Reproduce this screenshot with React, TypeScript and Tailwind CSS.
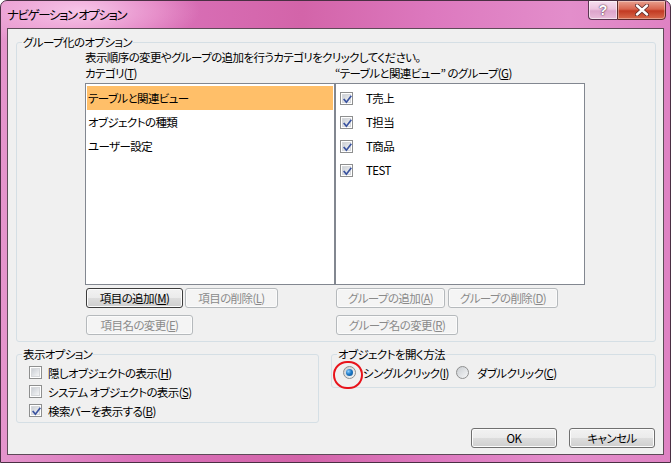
import React from "react";

const F = "font-['Noto_Sans_CJK_JP','Liberation_Sans',sans-serif] [font-feature-settings:'palt']";

function Check({ checked }: { checked: boolean }) {
  return (
    <div className="relative w-[13px] h-[13px] shrink-0 border border-[#8e8f8f] bg-white">
      <div className="absolute inset-[1px] bg-[linear-gradient(135deg,#cbcfd5_0%,#f4f5f6_100%)] border border-[#d6d8db]" />
      {checked && (
        <svg className="absolute left-[1px] top-[1px]" width="11" height="11" viewBox="0 0 11 11">
          <path d="M2.2 5.6 L4.4 8.2 L8.8 2.4" fill="none" stroke="#3b54a0" strokeWidth="1.7" strokeLinecap="square" />
        </svg>
      )}
    </div>
  );
}

function Radio({ checked }: { checked: boolean }) {
  return (
    <div className="relative w-[13px] h-[13px] shrink-0 rounded-full border border-[#8e8f8f] bg-[linear-gradient(135deg,#c9cdd1_0%,#f6f7f8_100%)]">
      {checked && (
        <div className="absolute left-[2px] top-[2px] w-[7px] h-[7px] rounded-full bg-[radial-gradient(circle_at_35%_35%,#8fd0ff_0%,#1d7ac8_45%,#0d4d8c_100%)]" />
      )}
    </div>
  );
}

function Btn({ children, cls, disabled, focus }: { children: React.ReactNode; cls: string; disabled?: boolean; focus?: boolean }) {
  const base = "h-[20px] shrink-0 flex items-center justify-center rounded-[3px] border text-[11.5px] leading-[16px] whitespace-nowrap";
  const st = disabled
    ? "border-[#b5b9bc] bg-[#f4f4f4] text-[#8a8a8a] shadow-[inset_0_0_0_1px_#fbfbfb]"
    : focus
    ? "border-[#3c3c3c] bg-[linear-gradient(#f2f2f2_0%,#ebebeb_50%,#dddddd_50%,#cfcfcf_100%)] text-black shadow-[inset_0_0_0_1px_#fcfcfc]"
    : "border-[#707070] bg-[linear-gradient(#f2f2f2_0%,#ebebeb_50%,#dddddd_50%,#cfcfcf_100%)] text-black shadow-[inset_0_0_0_1px_#fcfcfc]";
  return <div className={`${base} ${st} ${cls}`}>{children}</div>;
}

function Group({ label, cls, children }: { label: string; cls: string; children: React.ReactNode }) {
  return (
    <div className={`relative shrink-0 rounded-[3px] border border-[#d5dfe5] ${cls}`}>
      <div className="absolute left-[5px] top-[-9px] bg-[#f0f0f0] px-[1px] leading-[16px] text-black whitespace-nowrap">{label}</div>
      {children}
    </div>
  );
}

export default function App() {
  return (
    <div className={`w-[671px] h-[463px] ${F}`}>
      <div className="w-full h-full flex flex-col rounded-t-[7px] border border-[#4a2f43] bg-[linear-gradient(90deg,#e495cc_0%,#da72ba_20%,#d364a9_45%,#dd79bf_65%,#e38ecb_85%,#df82c3_100%)] relative overflow-hidden">
        <div className="absolute left-[-40px] top-[-30px] w-[240px] h-[80px] rounded-full bg-[radial-gradient(ellipse_at_center,rgba(255,220,245,0.75)_0%,rgba(255,200,235,0.35)_45%,rgba(255,200,235,0)_70%)]" />
        {/* title bar */}
        <div className="relative h-[27px] shrink-0 flex items-start justify-between pl-[6px] pr-[4px]">
          <div className="pt-[5px] text-[12.5px] leading-[18px] tracking-[-1.4px] text-black">ナビゲーション オプション</div>
          <div className="flex -mt-[1px]">
            <div className="w-[29px] h-[20px] rounded-bl-[4px] border border-[#5a3550] border-r-0 bg-[linear-gradient(#f6e0ef_0%,#ecc4de_45%,#dca4cb_55%,#e8bcd9_100%)] flex items-center justify-center shadow-[inset_0_0_0_1px_rgba(255,255,255,0.55)]">
              <span className="text-[14px] leading-[14px] font-bold text-white [text-shadow:0_0_2px_#5a3550,0_0_1px_#5a3550] font-['Liberation_Sans',sans-serif]">?</span>
            </div>
            <div className="w-[49px] h-[20px] rounded-br-[4px] border border-[#5a2a2a] bg-[linear-gradient(#e8a08f_0%,#d8654f_45%,#c23a22_55%,#d86a4c_100%)] flex items-center justify-center shadow-[inset_0_0_0_1px_rgba(255,255,255,0.35)]">
              <svg width="14" height="12" viewBox="0 0 14 12">
                <path d="M2 1.5 L12 10.5 M12 1.5 L2 10.5" stroke="#5a2a2a" strokeWidth="4" strokeLinecap="round" />
                <path d="M2 1.5 L12 10.5 M12 1.5 L2 10.5" stroke="#ffffff" strokeWidth="2.4" strokeLinecap="round" />
              </svg>
            </div>
          </div>
        </div>
        {/* client */}
        <div className="relative mx-[6px] h-[427px] shrink-0 border border-[#5e4a58] bg-[#f0f0f0] flex flex-col pl-[8px] pr-[7px] pt-[13px] pb-[6px] text-[11.5px] leading-[16px] tracking-[-0.6px] text-black">
          <Group label="グループ化のオプション" cls="w-[640px] h-[300px] pl-[68px] pt-[6px]">
            <div className="whitespace-nowrap">表示順序の変更やグループの追加を行うカテゴリをクリックしてください。</div>
            <div className="flex">
              {/* left column */}
              <div className="w-[250px] flex flex-col">
                <div>カテゴリ(<u>T</u>)</div>
                <div className="mt-[2px] h-[202px] border border-[#828790] bg-white pt-[2px] px-[1px]">
                  <div className="h-[24px] bg-[#ffbf69] flex items-center pl-[1px]">テーブルと関連ビュー</div>
                  <div className="h-[24px] flex items-center pl-[1px]">オブジェクトの種類</div>
                  <div className="h-[24px] flex items-center pl-[1px]">ユーザー設定</div>
                </div>
                <div className="mt-[3px] ml-[1px] flex gap-[2px]">
                  <Btn cls="w-[97px]" focus>項目の追加(<u>M</u>)</Btn>
                  <Btn cls="w-[93px]" disabled>項目の削除(<u>L</u>)</Btn>
                </div>
                <div className="mt-[7px] ml-[1px] flex">
                  <Btn cls="w-[107px]" disabled>項目名の変更(<u>E</u>)</Btn>
                </div>
              </div>
              {/* right column */}
              <div className="w-[250px] flex flex-col">
                <div className="whitespace-nowrap">“テーブルと関連ビュー” のグループ(<u>G</u>)</div>
                <div className="mt-[2px] h-[202px] border border-[#828790] bg-white pt-[2px] pl-[4px]">
                  {["T売上", "T担当", "T商品", "TEST"].map((t) => (
                    <div key={t} className="h-[24px] flex items-center">
                      <Check checked />
                      <span className="ml-[13px]">{t}</span>
                    </div>
                  ))}
                </div>
                <div className="mt-[3px] ml-[1px] flex gap-[3px]">
                  <Btn cls="w-[109px]" disabled>グループの追加(<u>A</u>)</Btn>
                  <Btn cls="w-[110px]" disabled>グループの削除(<u>D</u>)</Btn>
                </div>
                <div className="mt-[7px] ml-[1px] flex">
                  <Btn cls="w-[122px]" disabled>グループ名の変更(<u>R</u>)</Btn>
                </div>
              </div>
            </div>
          </Group>

          <div className="mt-[12px] flex items-start gap-[12px]">
            <Group label="表示オプション" cls="w-[303px] h-[69px] pl-[12px] pt-[8px]">
              {[
                ["隠しオブジェクトの表示(", "H", ")", false],
                ["システム オブジェクトの表示(", "S", ")", false],
                ["検索バーを表示する(", "B", ")", true],
              ].map(([a, k, b, c]) => (
                <div key={a as string} className="h-[19px] flex items-center">
                  <Check checked={c as boolean} />
                  <span className="ml-[6px] whitespace-nowrap">
                    {a as string}
                    <u>{k as string}</u>
                    {b as string}
                  </span>
                </div>
              ))}
            </Group>
            <Group label="オブジェクトを開く方法" cls="w-[325px] h-[34px] pl-[11px] pt-[8px]">
              <div className="h-[19px] flex items-center whitespace-nowrap">
                <div className="w-[113px] shrink-0 flex items-center">
                  <Radio checked />
                  <span className="ml-[7px]">シングルクリック(<u>I</u>)</span>
                </div>
                <Radio checked={false} />
                <span className="ml-[8px]">ダブルクリック(<u>C</u>)</span>
              </div>
              <div className="absolute left-[1px] top-[6px] w-[30px] h-[28px] rounded-full border-2 border-[#e8131b]" />
            </Group>
          </div>

          <div className="mt-[5px] flex justify-end gap-[12px] pr-[1px]">
            <Btn cls="w-[86px]">OK</Btn>
            <Btn cls="w-[86px]">キャンセル</Btn>
          </div>
        </div>
      </div>
    </div>
  );
}
